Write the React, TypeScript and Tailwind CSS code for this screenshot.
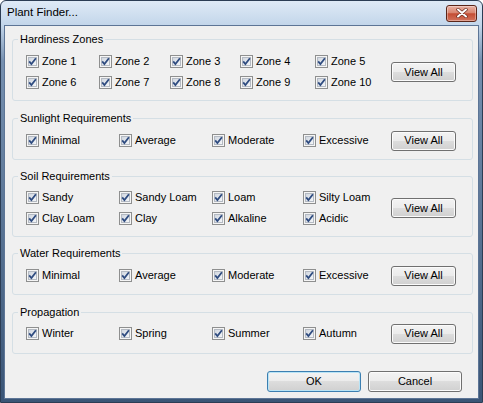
import React from 'react';

const font = "font-['Liberation_Sans',Arial,sans-serif]";

const CheckIcon: React.FC = () => (
  <svg width="13" height="13" viewBox="0 0 13 13" className="shrink-0">
    <defs>
      <linearGradient id="cbFill" x1="0" y1="0" x2="1" y2="1">
        <stop offset="0" stopColor="#cfd5de" />
        <stop offset="1" stopColor="#f6f8fa" />
      </linearGradient>
    </defs>
    <rect x="0.5" y="0.5" width="12" height="12" fill="#f5f5f5" stroke="#8e8f8f" />
    <rect x="2.5" y="2.5" width="8" height="8" fill="url(#cbFill)" stroke="#b4bac3" />
    <path d="M3.2 6.4 L5.4 9 L9.9 3.3" fill="none" stroke="#2f4c80" strokeWidth="1.8" />
  </svg>
);

const Check: React.FC<{ label: string }> = ({ label }) => (
  <label className="flex h-[21px] items-center gap-[3px] whitespace-nowrap">
    <CheckIcon />
    <span>{label}</span>
  </label>
);

const btnBase =
  'flex items-center justify-center rounded-[3px] border text-[11px] text-black bg-[linear-gradient(180deg,#f3f3f3_0%,#ebebeb_50%,#dddddd_50%,#d0d0d0_100%)]';

const ViewAll: React.FC = () => (
  <button className={`${btnBase} h-[20px] w-[65px] shrink-0 border-[#707070] shadow-[inset_0_0_0_1px_#fbfbfb]`}>
    View All
  </button>
);

type GroupProps = {
  title: string;
  items: string[];
  cols: string;
  mt: string;
  body: string;
};

const Group: React.FC<GroupProps> = ({ title, items, cols, mt, body }) => (
  <fieldset className={`ml-[7px] mr-[5px] rounded-[3px] border border-[#d5dfe5] ${mt}`}>
    <legend className="ml-[5px] px-[2px] leading-[13px]">{title}</legend>
    <div className={`flex items-center pl-[13px] pr-[16px] ${body}`}>
      <div className={`grid flex-1 ${cols}`}>
        {items.map((it) => (
          <Check key={it} label={it} />
        ))}
      </div>
      <ViewAll />
    </div>
  </fieldset>
);

const four = 'grid-cols-[93px_93px_91px_1fr]';

export default function App() {
  return (
    <div
      className={`${font} flex h-[403px] w-[483px] flex-col rounded-t-[6px] border border-[#2c3d54] bg-[linear-gradient(180deg,#dfeaf6_0px,#c3d6ea_24px,#7690b0_60px,#3a5576_100%)] text-[11px] text-black`}
    >
      {/* title bar */}
      <div className="flex h-[24px] shrink-0 items-center justify-between">
        <span className="pl-[6px] text-[11.5px] text-black">Plant Finder...</span>
        <div className="mr-[5px] flex h-[17px] w-[31px] items-center justify-center rounded-[3px] border border-[#5b2518] bg-[linear-gradient(180deg,#eab1a3_0%,#d98670_45%,#c44d33_52%,#d2735c_100%)] shadow-[inset_0_0_0_1px_rgba(255,255,255,0.35)]">
          <svg width="12" height="10" viewBox="0 0 12 10">
            <path d="M2 1.5 L10 8.5 M10 1.5 L2 8.5" stroke="#6a2b1f" strokeWidth="3.4" strokeLinecap="round" />
            <path d="M2 1.5 L10 8.5 M10 1.5 L2 8.5" stroke="#ffffff" strokeWidth="2" strokeLinecap="round" />
          </svg>
        </div>
      </div>

      {/* client area */}
      <div className="mx-[3px] mb-[3px] flex flex-1 flex-col border border-[#5d7596] bg-[#f0f0f0]">
        <Group
          title="Hardiness Zones"
          items={['Zone 1', 'Zone 2', 'Zone 3', 'Zone 4', 'Zone 5', 'Zone 6', 'Zone 7', 'Zone 8', 'Zone 9', 'Zone 10']}
          cols="grid-cols-[73px_71px_70px_75px_1fr]"
          mt="mt-[7px]"
          body="pt-[5px] pb-[7px]"
        />
        <Group
          title="Sunlight Requirements"
          items={['Minimal', 'Average', 'Moderate', 'Excessive']}
          cols={four}
          mt="mt-[11px]"
          body="pt-[5px] pb-[8px]"
        />
        <Group
          title="Soil Requirements"
          items={['Sandy', 'Sandy Loam', 'Loam', 'Silty Loam', 'Clay Loam', 'Clay', 'Alkaline', 'Acidic']}
          cols={four}
          mt="mt-[10px]"
          body="pt-[4px] pb-[7px]"
        />
        <Group
          title="Water Requirements"
          items={['Minimal', 'Average', 'Moderate', 'Excessive']}
          cols={four}
          mt="mt-[10px]"
          body="pt-[5px] pb-[8px]"
        />
        <Group
          title="Propagation"
          items={['Winter', 'Spring', 'Summer', 'Autumn']}
          cols={four}
          mt="mt-[11px]"
          body="pt-[4px] pb-[9px]"
        />

        <div className="flex-1" />

        <div className="flex justify-end gap-[7px] pb-[6px] pr-[16px]">
          <button className={`${btnBase} h-[21px] w-[94px] border-[#3c7fb1] shadow-[inset_0_0_0_1px_#b9e4f6]`}>OK</button>
          <button className={`${btnBase} h-[21px] w-[94px] border-[#707070] shadow-[inset_0_0_0_1px_#fbfbfb]`}>Cancel</button>
        </div>
      </div>
    </div>
  );
}
